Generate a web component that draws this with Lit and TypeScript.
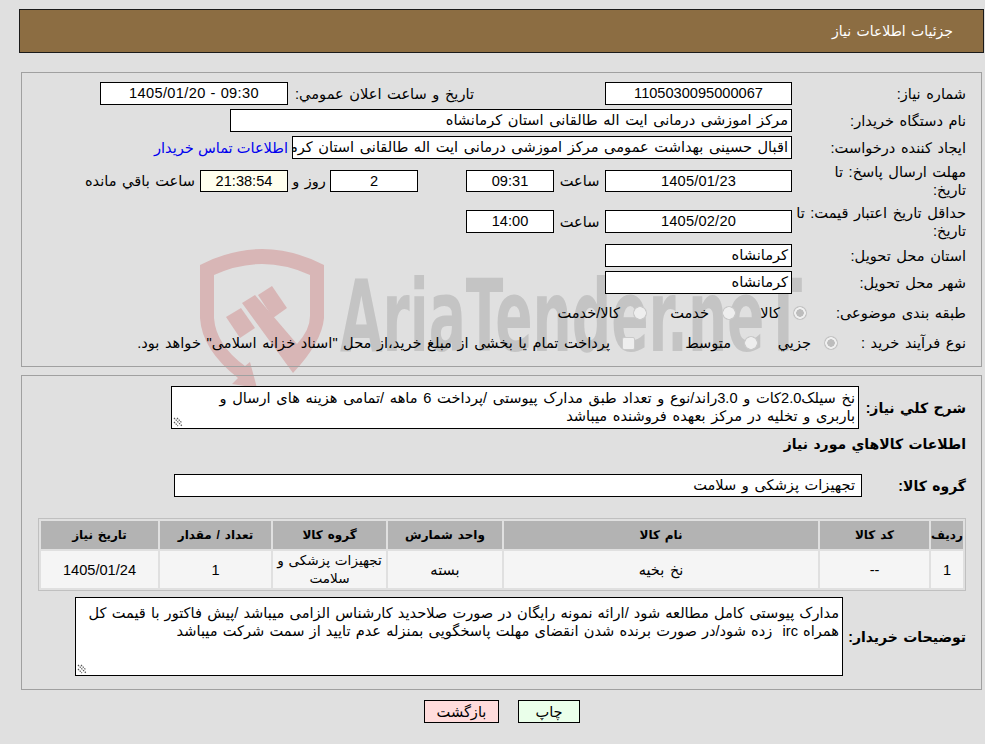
import { LitElement, html, css, svg } from "lit";
import { customElement } from "lit/decorators.js";

const DESC = "نخ سیلک2.0کات و 3.0راند/نوع و تعداد طبق مدارک پیوستی /پرداخت 6 ماهه /تمامی هزینه های ارسال و باربری و تخلیه در مرکز بعهده فروشنده میباشد";
const NOTE = "مدارک پیوستی کامل مطالعه شود /ارائه نمونه رایگان در صورت صلاحدید کارشناس الزامی میباشد /پیش فاکتور با قیمت کل همراه irc  زده شود/در صورت برنده شدن انقضای مهلت پاسخگویی بمنزله عدم تایید از سمت شرکت میباشد";

const grip = svg`<svg class="grip" width="10" height="10" viewBox="0 0 10 10" aria-hidden="true">
  <path d="M1 1 L9 9 M1 5 L5 9 M4 1 L9 6" stroke="#555" stroke-width="1.2" stroke-dasharray="1.4 1" fill="none"/>
</svg>`;

@customElement("app-root")
export class AppRoot extends LitElement {
  static styles = css`
    :host { display: block; }
    .page {
      position: relative; min-height: 100vh; box-sizing: border-box; overflow: hidden;
      background: #e0e0e0; color: #000; padding-top: 9px;
      font: 14.6px/18px "Liberation Sans", "DejaVu Sans", sans-serif; word-spacing: 1.5px; direction: rtl;
    }
    .mark { position: absolute; left: 0; top: 0; pointer-events: none; }
    .content { position: relative; z-index: 1; }
    .title {
      margin: 0 1px 0 19px; height: 42px; border: 1px solid #1a1a1a; background: #8c6d42;
      color: #fff; display: flex; align-items: center; padding-right: 30px; font-size: 14px;
    }
    .panel {
      margin: 19px 3px 0 21px; padding: 9px 15px 8px 0;
      border: 1px solid #a0a0a0; display: flex; flex-direction: column; gap: 4px;
    }
    .second { margin-top: 8px; padding-top: 10px; padding-bottom: 13px; gap: 0; }
    .row { display: flex; align-items: center; }
    .lab { width: 174px; flex: none; }
    .lab-wrap { width: 174px; padding-left: 20px; box-sizing: border-box; flex: none; }
    .lab-a { width: 159px; flex: none; white-space: nowrap; }
    .lab-b { width: 128px; flex: none; white-space: nowrap; }
    .box {
      box-sizing: border-box; height: 23px; line-height: 21px; border: 1px solid #000; background: #fff;
      padding: 0 3px; white-space: nowrap; overflow: hidden; text-align: center; flex: none;
    }
    .start { text-align: right; }
    .d187 { width: 187px; }
    .d188 { width: 188px; }
    .d88 { width: 88px; }
    .tall { height: 22px; line-height: 20px; }
    .timer { background: #ffffee; }
    .h36 { height: 36px; }
    .h37 { height: 37px; }
    .w562 { width: 562px; }
    .w500 { width: 500px; }
    .w688 { width: 688px; }
    .date { letter-spacing: .2px; }
    .pub { letter-spacing: .35px; word-spacing: .5px; }
    .pub-gap { width: 131px; flex: none; }
    .pub-lab { width: 186px; flex: none; white-space: nowrap; }
    .link { color: #0000ee; text-decoration: none; margin-right: 4px; white-space: nowrap; word-spacing: 0; }
    .hour { width: 51px; text-align: center; flex: none; }
    .gap48 { width: 48px; flex: none; }
    .gl { margin-right: 5px; white-space: nowrap; }
    .day { width: 42px; text-align: center; flex: none; }
    .choice { height: 30px; }
    .opts { display: flex; align-items: center; }
    .opt { display: flex; align-items: center; white-space: nowrap; }
    .w71 { width: 71px; }
    .w89 { width: 89px; }
    .w80 { width: 80px; }
    .w123 { width: 123px; }
    .radio {
      box-sizing: border-box; width: 14px; height: 14px; border-radius: 50%; flex: none; margin-left: 13px;
      background: radial-gradient(circle, #bdbdbd 0 3.5px, #f0f0f0 4px 5.5px, #c4c4c4 6px);
    }
    .radio.off { background: radial-gradient(circle, #eeeeee 0 5.5px, #cacaca 6px); }
    .check { box-sizing: border-box; width: 13px; height: 13px; border: 1px solid #cacaca; border-radius: 2px; background: #eeeeee; flex: none; margin-left: 12px; }
    .bold { font-weight: bold; font-size: 14px; white-space: nowrap; }
    .l107 { width: 107px; flex: none; }
    .l104 { width: 104px; flex: none; }
    .l123 { width: 123px; flex: none; }
    .area { position: relative; flex: none; }
    .grip { position: absolute; left: 2px; bottom: 2px; }
    textarea {
      box-sizing: border-box; display: block; border: 1px solid #000; border-radius: 0; background: #fff; outline: none;
      padding: 2px 3px; margin: 0; font: inherit; word-spacing: 1.1px; color: #000; overflow: hidden; resize: none; direction: rtl;
    }
    .ta1 { width: 688px; height: 43px; padding-left: 30px; word-spacing: 1.6px; }
    .ta2 { width: 768px; height: 79px; padding-top: 6px; }
    .heading { height: 20px; margin-top: 5px; display: flex; align-items: center; }
    .grp { margin-top: 20px; }
    .grp-box { padding-right: 6px; }
    table {
      width: 928px; box-sizing: border-box; table-layout: fixed; margin: 21px 0 6px; border: 1px solid #c0c0c0; border-spacing: 2px; border-collapse: separate;
    }
    th { height: 28px; padding: 0; background: #b3b3b3; font-size: 12px; font-weight: bold; }
    td { height: 37px; padding: 0; background: #f5f5f5; text-align: center; line-height: 18px; }
    .grp-cell { font-size: 13.6px; word-spacing: 1px; }
    .c1 { width: 32px; } .c2 { width: 109px; } .c3 { width: 314px; } .c4 { width: 114px; }
    .c5 { width: 113px; } .c6 { width: 111px; } .c7 { width: 117px; }
    .actions { display: flex; justify-content: center; gap: 19px; margin: 10px 0 0; padding-left: 19px; }
    .btn { box-sizing: border-box; height: 23px; border: 1px solid #000; display: flex; align-items: center; justify-content: center; }
    .print { width: 62px; background: #eaffea; }
    .back { width: 75px; background: #ffdcdc; }
  `;

  render() {
    return html`<div class="page">
      <svg class="mark" width="985" height="744" viewBox="0 0 985 744" aria-hidden="true">
        <g fill="#d8b6b6">
          <path d="M200 265 Q262 233 324 265 L324 318 Q322 342 293 373 L242 303 L255 295 L297 344 Q310 330 310 316 L310 275 Q262 253 214 275 L214 318 Q216 345 245 366 L250 362 L257 388 L232 384 L238 378 Q202 350 200 318 Z"/>
          <path d="M226 317 L241 308 L255 328 L240 338 Z"/>
          <path d="M258 295 L272 286 L287 308 L273 318 Z"/>
        </g>
        <text x="340" y="351" fill="#c4c4c4" font-family="DejaVu Sans Condensed, DejaVu Sans" font-weight="bold" font-size="100" textLength="462" lengthAdjust="spacingAndGlyphs" direction="ltr">AriaTender.neT</text>
      </svg>
      <div class="content">
        <div class="title">جزئیات اطلاعات نیاز</div>
        <section class="panel">
          <div class="row">
            <div class="lab">شماره نیاز:</div>
            <div class="box d187">1105030095000067</div>
            <div class="pub-gap"></div>
            <div class="pub-lab">تاریخ و ساعت اعلان عمومي:</div>
            <div class="box d188 pub" dir="ltr">1405/01/20 - 09:30</div>
          </div>
          <div class="row">
            <div class="lab">نام دستگاه خریدار:</div>
            <div class="box w562 start">مرکز اموزشی درمانی ایت اله طالقانی استان کرمانشاه</div>
          </div>
          <div class="row">
            <div class="lab">ایجاد کننده درخواست:</div>
            <div class="box w500 start">اقبال حسینی بهداشت عمومی مرکز اموزشی درمانی ایت اله طالقانی استان کرمانشاه</div>
            <a class="link" href="#">اطلاعات تماس خریدار</a>
          </div>
          <div class="row h36">
            <div class="lab-wrap">مهلت ارسال پاسخ: تا تاریخ:</div>
            <div class="box d187 tall date">1405/01/23</div>
            <div class="hour">ساعت</div>
            <div class="box d88 tall">09:31</div>
            <div class="gap48"></div>
            <div class="box d88 tall">2</div>
            <div class="day">روز و</div>
            <div class="box d88 tall timer">21:38:54</div>
            <div class="gl">ساعت باقي مانده</div>
          </div>
          <div class="row h37">
            <div class="lab">حداقل تاریخ اعتبار قیمت: تا تاریخ:</div>
            <div class="box d187 date">1405/02/20</div>
            <div class="hour">ساعت</div>
            <div class="box d88">14:00</div>
          </div>
          <div class="row">
            <div class="lab">استان محل تحویل:</div>
            <div class="box d187 start">کرمانشاه</div>
          </div>
          <div class="row">
            <div class="lab">شهر محل تحویل:</div>
            <div class="box d187 start">کرمانشاه</div>
          </div>
          <div>
            <div class="row choice">
              <div class="lab-a">طبقه بندی موضوعی:</div>
              <div class="opts">
                <div class="opt w71"><span class="radio"></span>کالا</div>
                <div class="opt w89"><span class="radio off"></span>خدمت</div>
                <div class="opt"><span class="radio off"></span>کالا/خدمت</div>
              </div>
            </div>
            <div class="row choice">
              <div class="lab-b">نوع فرآیند خرید :</div>
              <div class="opts">
                <div class="opt w80"><span class="radio"></span>جزیي</div>
                <div class="opt w123"><span class="radio off"></span>متوسط</div>
                <div class="opt"><span class="check"></span>پرداخت تمام یا بخشی از مبلغ خرید،از محل "اسناد خزانه اسلامی" خواهد بود.</div>
              </div>
            </div>
          </div>
        </section>
        <section class="panel second">
          <div class="row">
            <div class="l107 bold">شرح کلي نیاز:</div>
            <div class="area">
              <textarea class="ta1" readonly .value=${DESC}></textarea>
              ${grip}
            </div>
          </div>
          <div class="heading bold">اطلاعات کالاهاي مورد نیاز</div>
          <div class="row grp">
            <div class="l104 bold">گروه کالا:</div>
            <div class="box w688 start grp-box">تجهیزات پزشکی و سلامت</div>
          </div>
          <table>
            <thead>
              <tr>
                <th class="c1">رديف</th><th class="c2">کد کالا</th><th class="c3">نام کالا</th><th class="c4">واحد شمارش</th>
                <th class="c5">گروه کالا</th><th class="c6">تعداد / مقدار</th><th class="c7">تاریخ نیاز</th>
              </tr>
            </thead>
            <tbody>
              <tr>
                <td>1</td><td>--</td><td>نخ بخیه</td><td>بسته</td><td class="grp-cell">تجهیزات پزشکی و سلامت</td><td>1</td><td>1405/01/24</td>
              </tr>
            </tbody>
          </table>
          <div class="row">
            <div class="l123 bold">توضیحات خریدار:</div>
            <div class="area">
              <textarea class="ta2" readonly .value=${NOTE}></textarea>
              ${grip}
            </div>
          </div>
        </section>
        <div class="actions">
          <div class="btn print">چاپ</div>
          <div class="btn back">بازگشت</div>
        </div>
      </div>
    </div>`;
  }
}
